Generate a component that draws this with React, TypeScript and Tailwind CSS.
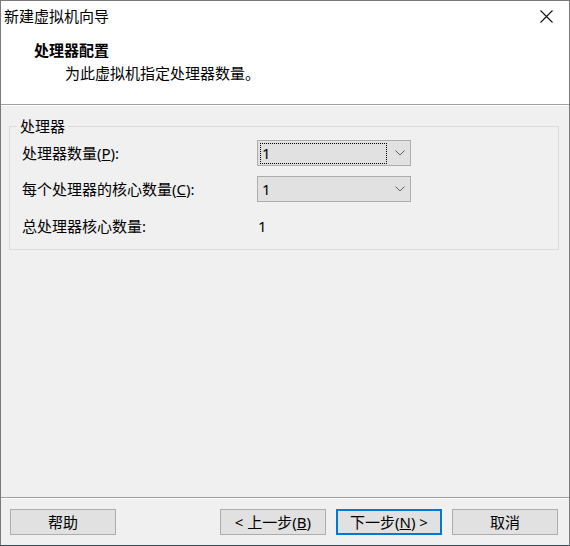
import React from "react";

const FONT = "font-['Noto_Sans','Noto_Sans_CJK_SC',sans-serif]";

function Chevron() {
  return (
    <svg width="10" height="6" viewBox="0 0 10 6" className="text-[#606060]">
      <path d="M0.5 0.5 L5 5 L9.5 0.5" fill="none" stroke="currentColor" strokeWidth="1" />
    </svg>
  );
}

function Select({ value, focused }: { value: string; focused?: boolean }) {
  return (
    <div className="w-[154px] h-[26px] bg-[#e1e1e1] border border-[#adadad] flex items-center pl-[2px] pr-[5px]">
      <div
        className={`flex-1 h-[21px] flex items-center pl-[1px] ${
          focused ? "border border-dotted border-black" : "border border-transparent"
        } mr-[8px]`}
      >
        {value}
      </div>
      <Chevron />
    </div>
  );
}

function Button({ children, primary }: { children: React.ReactNode; primary?: boolean }) {
  return (
    <button
      className={`w-[106px] h-[26px] bg-[#e1e1e1] flex items-center justify-center text-[15px] text-black ${
        primary ? "border-2 border-[#0078d7]" : "border border-[#adadad]"
      }`}
    >
      {children}
    </button>
  );
}

export default function App() {
  return (
    <div
      className={`${FONT} w-[570px] h-[546px] flex flex-col border-l border-r border-t border-[#7a7a7a] border-b border-b-[#3a4851] text-[15px] text-black bg-[#f0f0f0] overflow-hidden`}
    >
      {/* Title bar */}
      <div className="h-[31px] bg-white flex items-center justify-between pl-[3px] pr-[16px]">
        <span className="leading-none">新建虚拟机向导</span>
        <svg width="13" height="13" viewBox="0 0 13 13">
          <path d="M0.5 0.5 L12.5 12.5 M12.5 0.5 L0.5 12.5" stroke="#111" strokeWidth="1.1" />
        </svg>
      </div>

      {/* Header */}
      <div className="h-[73px] bg-white border-b border-[#a0a0a0] pl-[33px] pt-[8px]">
        <div className="h-[20px] font-bold leading-[20px]">处理器配置</div>
        <div className="h-[20px] leading-[20px] mt-[3px] pl-[31px]">为此虚拟机指定处理器数量。</div>
      </div>

      {/* Body */}
      <div className="flex-1 border-t border-white pt-[10px]">
        <fieldset className="ml-[8px] w-[550px] border border-[#dcdcdc] pb-[10px] pl-[12px]">
          <legend className="ml-[-5px] px-[3px] leading-[20px]">处理器</legend>
          <div className="flex flex-col gap-[10px] pt-[4px]">
            <div className="flex items-center h-[26px]">
              <div className="w-[235px]">
                处理器数量(<span className="underline">P</span>):
              </div>
              <Select value="1" focused />
            </div>
            <div className="flex items-center h-[26px]">
              <div className="w-[235px]">
                每个处理器的核心数量(<span className="underline">C</span>):
              </div>
              <Select value="1" />
            </div>
            <div className="flex items-center h-[26px] mt-[1px]">
              <div className="w-[236px]">总处理器核心数量:</div>
              <div>1</div>
            </div>
          </div>
        </fieldset>
      </div>

      {/* Footer */}
      <div className="h-[48px] border-t border-[#a0a0a0] flex flex-col">
        <div className="h-px bg-white" />
        <div className="flex items-center pt-[10px] pl-[9px] pr-[11px]">
          <Button>帮助</Button>
          <div className="flex-1" />
          <div className="flex gap-[10px]">
            <Button>
              &lt; 上一步(<span className="underline">B</span>)
            </Button>
            <Button primary>
              下一步(<span className="underline">N</span>) &gt;
            </Button>
            <Button>取消</Button>
          </div>
        </div>
      </div>
    </div>
  );
}
